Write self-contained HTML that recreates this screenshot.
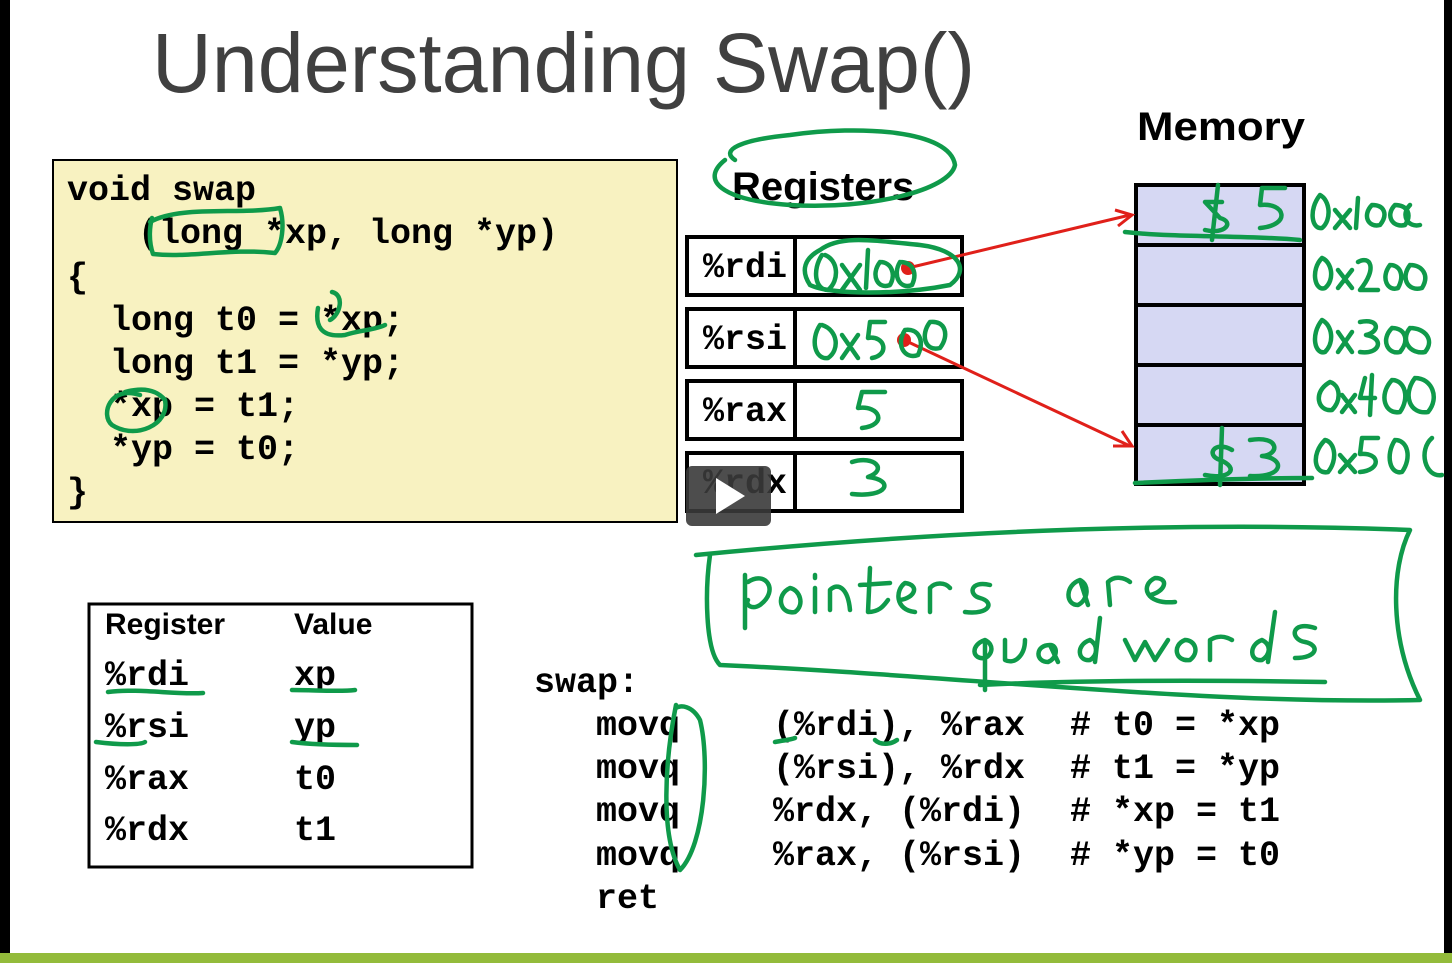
<!DOCTYPE html>
<html><head><meta charset="utf-8"><style>
html,body{margin:0;padding:0;background:#fff;width:1452px;height:963px;overflow:hidden}
svg{display:block}
.m{font-family:"Liberation Mono",monospace;font-weight:bold;font-size:35px;fill:#000}
.s{font-family:"Liberation Sans",sans-serif;font-weight:bold;fill:#000}
.g{fill:none;stroke:#0f9a4a;stroke-width:4.5;stroke-linecap:round;stroke-linejoin:round}
</style></head><body>
<svg width="1452" height="963" viewBox="0 0 1452 963">
<rect x="0" y="0" width="1452" height="963" fill="#fff"/>
<rect x="0" y="0" width="10" height="963" fill="#000"/>
<rect x="1444" y="0" width="8" height="963" fill="#000"/>
<rect x="0" y="953" width="1452" height="10" fill="#93bb3b"/>

<text x="152" y="92" textLength="823" lengthAdjust="spacingAndGlyphs" style="font-family:'Liberation Sans',sans-serif;font-size:84px;fill:#404040">Understanding Swap()</text>

<rect x="53" y="160" width="624" height="362" fill="#f8f2c1" stroke="#000" stroke-width="2"/>
<g class="m">
<text x="67" y="200">void swap</text>
<text x="138" y="243">(long *xp, long *yp)</text>
<text x="67" y="287">{</text>
<text x="110" y="330">long t0 = *xp;</text>
<text x="110" y="373">long t1 = *yp;</text>
<text x="110" y="416">*xp = t1;</text>
<text x="110" y="459">*yp = t0;</text>
<text x="67" y="502">}</text>
</g>

<text class="s" x="732" y="200" font-size="40">Registers</text>
<text class="s" x="1137" y="140" font-size="40" textLength="168" lengthAdjust="spacingAndGlyphs">Memory</text>

<g stroke="#000" stroke-width="4" fill="#fff">
<rect x="687" y="237" width="275" height="58"/><line x1="795" y1="237" x2="795" y2="295"/>
<rect x="687" y="309" width="275" height="58"/><line x1="795" y1="309" x2="795" y2="367"/>
<rect x="687" y="381" width="275" height="58"/><line x1="795" y1="381" x2="795" y2="439"/>
<rect x="687" y="453" width="275" height="58"/><line x1="795" y1="453" x2="795" y2="511"/>
</g>
<g class="m">
<text x="703" y="277">%rdi</text>
<text x="703" y="349">%rsi</text>
<text x="703" y="421">%rax</text>
<text x="703" y="493">%rdx</text>
</g>
<rect x="686" y="466" width="85" height="60" rx="6" fill="#3a3a3a" opacity="0.9"/>
<polygon points="716,478 716,514 745,496" fill="#fff"/>

<rect x="1136" y="185" width="168" height="299" fill="#d6d8f3" stroke="#000" stroke-width="4"/>
<g stroke="#000" stroke-width="4">
<line x1="1136" y1="245" x2="1304" y2="245"/><line x1="1136" y1="305" x2="1304" y2="305"/>
<line x1="1136" y1="365" x2="1304" y2="365"/><line x1="1136" y1="425" x2="1304" y2="425"/>
</g>

<rect x="89" y="604" width="383" height="263" fill="#fff" stroke="#000" stroke-width="3"/>
<text class="s" x="105" y="634" font-size="30">Register</text>
<text class="s" x="294" y="634" font-size="30">Value</text>
<g class="m">
<text x="105" y="685">%rdi</text><text x="294" y="685">xp</text>
<text x="105" y="737">%rsi</text><text x="294" y="737">yp</text>
<text x="105" y="789">%rax</text><text x="294" y="789">t0</text>
<text x="105" y="840">%rdx</text><text x="294" y="840">t1</text>
</g>

<g class="m">
<text x="534" y="692">swap:</text>
<text x="596" y="735">movq</text><text x="773" y="735">(%rdi), %rax</text><text x="1070" y="735"># t0 = *xp</text>
<text x="596" y="778">movq</text><text x="773" y="778">(%rsi), %rdx</text><text x="1070" y="778"># t1 = *yp</text>
<text x="596" y="821">movq</text><text x="773" y="821">%rdx, (%rdi)</text><text x="1070" y="821"># *xp = t1</text>
<text x="596" y="865">movq</text><text x="773" y="865">%rax, (%rsi)</text><text x="1070" y="865"># *yp = t0</text>
<text x="596" y="908">ret</text>
</g>

<g stroke="#e0201a" stroke-width="3" fill="none">
<line x1="908" y1="268" x2="1130" y2="215"/>
<polyline points="1115,210 1132,215 1118,226"/>
<line x1="904" y1="340" x2="1130" y2="446"/>
<polyline points="1113,446 1132,446 1122,431"/>
</g>
<circle cx="908" cy="268" r="7" fill="#e0201a"/>
<circle cx="904" cy="340" r="7" fill="#e0201a"/>

<g class="g">
<path d="M150,222 C180,205 240,215 280,208 C285,225 282,245 275,253 C230,248 190,258 153,254 C148,240 150,225 152,218"/>
<path d="M332,292 C345,295 340,315 330,320 M318,308 C315,325 320,338 345,335 C360,330 375,330 385,325"/>
<path d="M140,395 C110,385 100,415 112,425 C135,440 170,425 165,400 C155,388 140,388 125,392"/>
<path d="M725,160 C700,180 720,200 790,205 C870,210 950,190 955,165 C950,130 860,125 790,135 C740,140 720,150 735,160"/>
<path d="M820,250 C840,235 870,240 920,245 C960,250 970,270 950,285 C900,295 830,295 810,285 C800,270 805,258 820,250"/>
<path d="M822,255 C812,270 815,290 828,290 C840,280 838,260 825,255 M842,265 L860,290 M860,265 L842,290 M868,250 L866,288 M880,262 C870,275 878,290 890,285 C896,275 892,262 880,262 M900,262 C892,275 900,290 912,285 C918,272 912,262 900,262"/>
<path d="M820,325 C810,340 815,360 828,358 C840,350 838,330 822,325 M842,335 L858,358 M858,335 L842,358 M885,322 L870,322 L868,338 C885,335 890,355 872,358 M905,330 C895,345 905,360 918,355 C925,340 918,328 905,330 M930,322 C920,335 925,352 940,348 C950,335 945,320 930,322"/>
<path d="M885,392 L862,392 L858,408 C880,405 888,425 862,428"/>
<path d="M852,462 C875,455 888,470 868,477 C895,480 888,498 852,494"/>
<path d="M1222,202 L1205,202 L1220,218 C1235,222 1225,235 1205,230 M1218,185 L1212,240 M1285,188 L1262,188 L1260,205 C1285,202 1292,225 1260,228"/>
<path d="M1125,232 C1180,238 1250,235 1300,240"/>
<path d="M1232,450 C1215,440 1205,455 1220,460 C1240,468 1230,480 1205,475 M1222,428 L1220,485 M1250,440 C1280,435 1280,455 1262,456 C1285,458 1285,478 1250,476"/>
<path d="M1135,483 C1200,480 1260,478 1312,478"/>
<path d="M1320,195 C1308,210 1312,230 1322,228 C1332,220 1330,200 1320,195 M1335,210 L1350,228 M1350,210 L1335,228 M1358,198 L1356,228 M1372,205 C1362,215 1368,228 1380,225 C1388,215 1385,205 1372,205 M1395,205 C1385,215 1392,228 1405,225 C1412,215 1408,205 1395,205 M1410,205 C1400,215 1408,228 1420,225"/>
<path d="M1322,258 C1310,270 1315,292 1325,288 C1335,280 1332,262 1322,258 M1338,270 L1352,288 M1352,270 L1338,288 M1358,262 C1370,255 1378,268 1360,290 L1378,290 M1390,265 C1380,278 1388,292 1398,288 C1405,275 1400,265 1390,265 M1410,265 C1400,278 1408,292 1422,288 C1430,275 1422,265 1410,265"/>
<path d="M1322,320 C1310,335 1315,355 1325,352 C1335,342 1332,325 1322,320 M1338,332 L1352,352 M1352,332 L1338,352 M1360,322 C1380,318 1380,332 1366,335 C1385,338 1380,355 1360,352 M1392,328 C1380,340 1388,355 1400,352 C1410,340 1405,328 1392,328 M1410,328 C1400,340 1410,355 1425,352 C1435,340 1425,328 1410,328"/>
<path d="M1330,382 C1312,392 1318,412 1332,410 C1342,400 1340,385 1330,382 M1342,395 L1355,412 M1355,395 L1342,412 M1365,378 L1360,398 L1375,398 M1372,375 L1370,415 M1392,380 C1378,395 1385,415 1400,412 C1410,398 1405,380 1392,380 M1415,378 C1402,395 1410,415 1428,412 C1440,398 1432,378 1415,378"/>
<path d="M1325,440 C1310,455 1315,475 1328,472 C1338,460 1335,442 1325,440 M1340,455 L1355,472 M1355,455 L1340,472 M1378,438 L1362,438 L1360,454 C1380,452 1382,470 1360,472 M1395,440 C1385,455 1390,475 1402,472 C1412,458 1408,440 1395,440 M1432,438 C1418,450 1425,478 1442,475"/>
<path d="M696,555 C900,535 1150,520 1410,530 C1390,570 1390,640 1420,700 C1200,705 950,675 720,665 C705,650 705,590 710,555"/>
<path d="M745,575 L745,628 M748,582 C765,570 780,590 760,605 C752,610 745,605 748,600 M790,588 C775,595 780,615 795,612 C805,605 800,590 790,588 M815,588 L815,612 M815,575 L815,578 M830,610 L830,590 C838,582 848,588 850,610 M870,568 L868,612 C880,612 884,605 888,600 M860,585 L890,583 M900,600 C915,598 920,585 905,583 C895,590 895,610 915,612 M930,612 L930,588 C935,582 945,582 950,588 M990,585 C970,580 968,595 980,598 C995,602 990,615 965,612"/>
<path d="M1080,580 C1065,585 1065,605 1078,605 C1088,600 1090,585 1080,580 L1088,605 M1110,605 L1108,582 C1115,575 1125,578 1130,582 M1150,595 C1165,592 1170,578 1155,578 C1140,585 1145,605 1175,602"/>
<path d="M985,640 C970,645 972,660 985,658 C992,655 995,645 985,640 L985,690 M1005,640 L1005,660 C1015,665 1025,655 1025,640 M1050,645 C1035,645 1035,662 1048,662 C1058,658 1058,645 1050,645 L1058,662 M1090,640 C1075,645 1078,662 1090,660 C1098,655 1098,645 1090,640 M1100,618 L1095,662 M1125,640 L1135,660 L1145,642 L1155,660 L1168,640 M1185,640 C1172,645 1175,662 1190,660 C1200,652 1195,640 1185,640 M1210,660 L1210,640 C1218,635 1225,636 1232,640 M1262,640 C1248,645 1250,662 1262,660 C1270,655 1272,645 1262,640 M1275,612 L1268,662 M1315,628 C1290,620 1290,640 1305,642 C1320,645 1318,658 1295,658"/>
<path d="M980,685 C1080,680 1200,680 1325,682"/>
<path d="M108,692 C140,688 175,695 203,693 M96,742 C120,745 140,745 145,742 M292,690 C315,690 340,692 355,690 M292,742 C315,745 340,745 357,745"/>
<path d="M775,742 C785,740 790,740 795,738 M875,740 C880,745 890,745 897,740"/>
<path d="M676,705 C665,760 660,835 680,870 C705,845 710,760 700,720 C692,705 680,705 676,708"/>
</g>
</svg>
</body></html>
